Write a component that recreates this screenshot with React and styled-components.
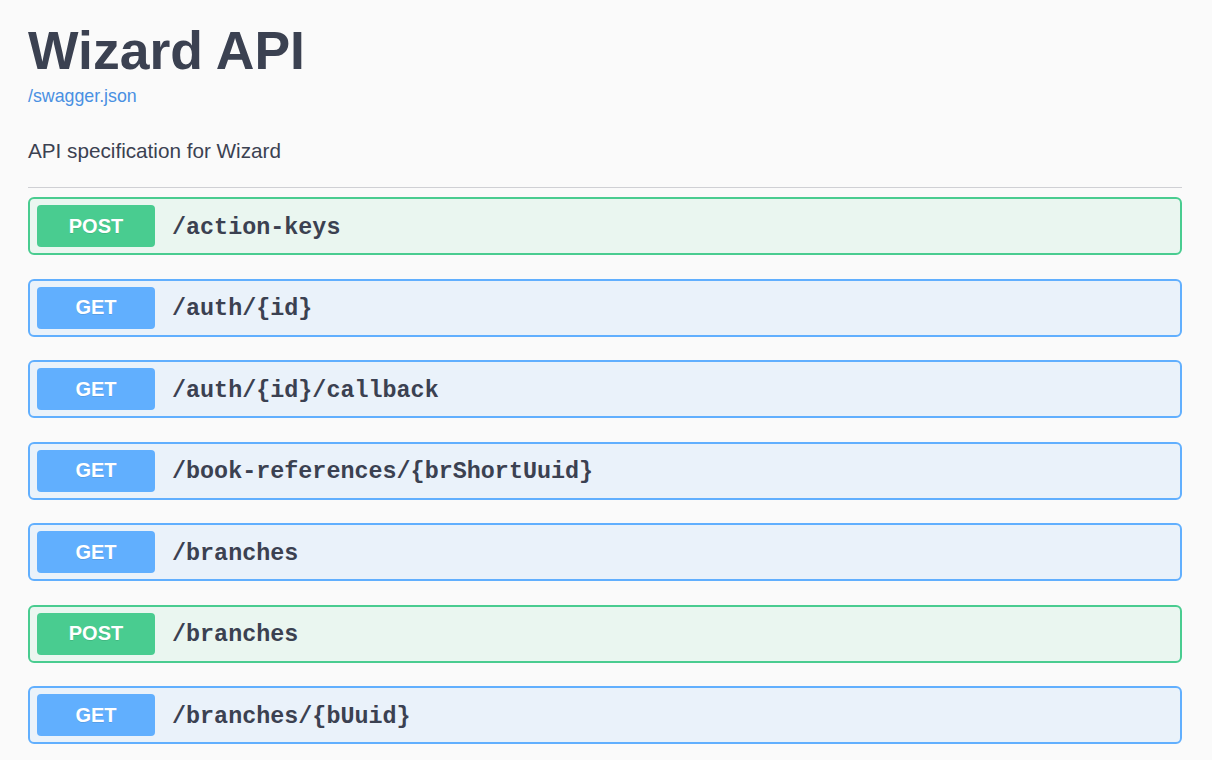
import React from 'react';
import styled, { createGlobalStyle } from 'styled-components';

const GlobalStyle = createGlobalStyle`
  html, body {
    margin: 0;
    padding: 0;
    background: #fafafa;
  }
`;

const Page = styled.div`
  padding: 21px 30px 0 28px;
  font-family: 'Liberation Sans', Arial, sans-serif;
  color: #3b4151;
`;

const Title = styled.h1`
  margin: 0;
  font-size: 53.5px;
  line-height: 60px;
  font-weight: 700;
  color: #3b4151;
`;

const SpecLink = styled.a`
  display: block;
  margin-top: 5px;
  font-size: 17.8px;
  line-height: 20px;
  color: #4990e2;
  text-decoration: none;
`;

const Description = styled.p`
  margin: 33px 0 0;
  font-size: 20.7px;
  line-height: 24px;
  color: #3b4151;
`;

const Rule = styled.hr`
  margin: 24px 0 9px;
  border: 0;
  border-top: 1px solid #cfd0d4;
  height: 0;
`;

const colors = {
  POST: { main: '#49cc90', bg: 'rgba(73, 204, 144, 0.085)' },
  GET: { main: '#61affe', bg: 'rgba(97, 175, 254, 0.1)' },
};

const Block = styled.div`
  box-sizing: border-box;
  height: 58px;
  margin-bottom: 23.5px;
  display: flex;
  align-items: center;
  padding: 0 7px;
  border: 2px solid ${(p) => colors[p.$method].main};
  border-radius: 6px;
  background: ${(p) => colors[p.$method].bg};
`;

const Method = styled.span`
  box-sizing: border-box;
  width: 118px;
  height: 42px;
  display: flex;
  align-items: center;
  justify-content: center;
  border-radius: 4px;
  background: ${(p) => colors[p.$method].main};
  color: #fff;
  font-family: 'Liberation Sans', Arial, sans-serif;
  font-weight: 700;
  font-size: 20px;
  text-shadow: 0 1px 0 rgba(0, 0, 0, 0.1);
`;

const Path = styled.span`
  padding: 3px 0 0 17px;
  font-family: 'Liberation Mono', 'Courier New', monospace;
  font-weight: 700;
  font-size: 23.4px;
  color: #3b4151;
`;

const endpoints = [
  ['POST', '/action-keys'],
  ['GET', '/auth/{id}'],
  ['GET', '/auth/{id}/callback'],
  ['GET', '/book-references/{brShortUuid}'],
  ['GET', '/branches'],
  ['POST', '/branches'],
  ['GET', '/branches/{bUuid}'],
];

const App = () => {
  return (
    <>
      <GlobalStyle />
      <Page>
        <Title>Wizard API</Title>
        <SpecLink href="#">/swagger.json</SpecLink>
        <Description>API specification for Wizard</Description>
        <Rule />
        {endpoints.map(([method, path], i) => (
          <Block key={i} $method={method}>
            <Method $method={method}>{method}</Method>
            <Path>{path}</Path>
          </Block>
        ))}
      </Page>
    </>
  );
};

export default App;
